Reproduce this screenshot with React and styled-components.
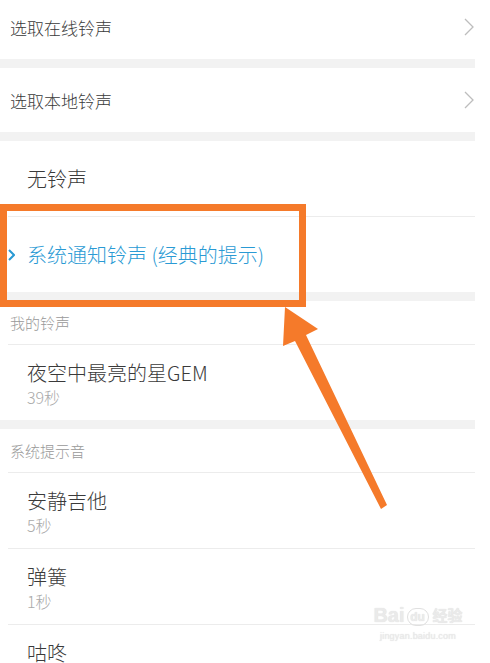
import React from "react";
import styled, { createGlobalStyle } from "styled-components";

const Global = createGlobalStyle`
  html, body { margin: 0; padding: 0; background: #ffffff; }
  body { font-family: "Noto Sans CJK SC", "Noto Sans", sans-serif; font-weight: 300; overflow: hidden; }
  * { box-sizing: border-box; }
`;

const Page = styled.div`
  position: relative;
  width: 490px;
  height: 663px;
  overflow: hidden;
  background: #ffffff;
`;

const Gap = styled.div`
  height: ${(p) => p.$h || 9}px;
  margin-right: 15px;
  background: #f2f2f2;
`;

const NavRow = styled.div`
  height: ${(p) => p.$h}px;
  padding: 0 16px ${(p) => p.$pb || 0}px 10px;
  display: flex;
  align-items: center;
  justify-content: space-between;
  font-size: 17px;
  color: #3a3a3a;
`;

const Item = styled.div`
  height: ${(p) => p.$h || 76}px;
  margin-left: 8px;
  margin-right: 15px;
  border-top: ${(p) => (p.$noLine ? "none" : "1px solid #ececec")};
  display: flex;
  align-items: ${(p) => (p.$top ? "flex-start" : "center")};
  padding-top: ${(p) => (p.$top ? "14px" : "0")};
  color: ${(p) => (p.$active ? "#2a9ad4" : "#3a3a3a")};
`;

const Marker = styled.div`
  width: 19px;
  display: flex;
  align-items: center;
  flex: none;
`;

const Texts = styled.div`
  display: flex;
  flex-direction: column;
`;

const Title = styled.div`
  font-size: 20px;
  line-height: 28px;
`;

const Sub = styled.div`
  font-size: 16px;
  line-height: 20px;
  color: #aaa;
`;

const Header = styled.div`
  height: 43px;
  padding-left: 10px;
  display: flex;
  align-items: center;
  font-size: 15px;
  color: #999;
`;

const HighlightBox = styled.div`
  position: absolute;
  left: 0;
  top: 204px;
  width: 306px;
  height: 103px;
  border: 7px solid #f57a2a;
`;

const ArrowSvg = styled.svg`
  position: absolute;
  left: 0;
  top: 0;
  pointer-events: none;
`;

const Watermark = styled.div`
  position: absolute;
  left: 372px;
  top: 604px;
  width: 92px;
  display: flex;
  flex-direction: column;
  align-items: center;
  color: rgba(236, 236, 236, 0.95);
  text-shadow: 0 0 1px #d6d6d6;
  font-family: "Liberation Sans", sans-serif;
`;

const WmTop = styled.div`
  display: flex;
  align-items: flex-end;
  gap: 2px;
  font-size: 20px;
  font-weight: bold;
  line-height: 22px;
`;

const WmPaw = styled.span`
  display: inline-flex;
  align-items: center;
  justify-content: center;
  width: 22px;
  height: 18px;
  border-radius: 9px;
  border: 1.5px solid #e0e0e0;
  font-size: 12px;
  line-height: 12px;
  color: #ececec;
`;

const WmCn = styled.span`
  font-family: "Noto Sans CJK SC", sans-serif;
  font-size: 15px;
  font-weight: bold;
  margin-left: 2px;
`;

const WmUrl = styled.div`
  font-size: 9px;
  line-height: 12px;
  margin-top: 4px;
  letter-spacing: 0.2px;
`;

const Chevron = ({ color = "#bdbdbd", w = 10, h = 18, sw = 1.3 }) => (
  <svg width={w} height={h} viewBox={`0 0 ${w} ${h}`}>
    <polyline
      points={`1,1 ${w - 1},${h / 2} 1,${h - 1}`}
      fill="none"
      stroke={color}
      strokeWidth={sw}
    />
  </svg>
);

const Entry = ({ title, sub, ...rest }) => (
  <Item $top={!!sub} {...rest}>
    <Marker />
    <Texts>
      <Title>{title}</Title>
      {sub && <Sub>{sub}</Sub>}
    </Texts>
  </Item>
);

export default function App() {
  return (
    <Page>
      <Global />
      <NavRow $h={59} $pb={5}>
        <span>选取在线铃声</span>
        <Chevron />
      </NavRow>
      <Gap />
      <NavRow $h={64}>
        <span>选取本地铃声</span>
        <Chevron />
      </NavRow>
      <Gap />
      <Entry title="无铃声" $h={75} $noLine />
      <Item $h={76} $active>
        <Marker>
          <Chevron color="#2a9ad4" w={7} h={12} sw={2} />
        </Marker>
        <Title>系统通知铃声 (经典的提示)</Title>
      </Item>
      <Gap />
      <Header>我的铃声</Header>
      <Entry title="夜空中最亮的星GEM" sub="39秒" />
      <Gap />
      <Header>系统提示音</Header>
      <Entry title="安静吉他" sub="5秒" />
      <Entry title="弹簧" sub="1秒" />
      <Entry title="咕咚" sub="" $top />

      <HighlightBox />
      <ArrowSvg width="490" height="663">
        <polygon
          points="285,307 318,329 306,335 387,505 381,509 295,341 283,346"
          fill="#f57a2a"
        />
      </ArrowSvg>
      <Watermark>
        <WmTop>
          <span>Bai</span>
          <WmPaw>du</WmPaw>
          <WmCn>经验</WmCn>
        </WmTop>
        <WmUrl>jingyan.baidu.com</WmUrl>
      </Watermark>
    </Page>
  );
}
